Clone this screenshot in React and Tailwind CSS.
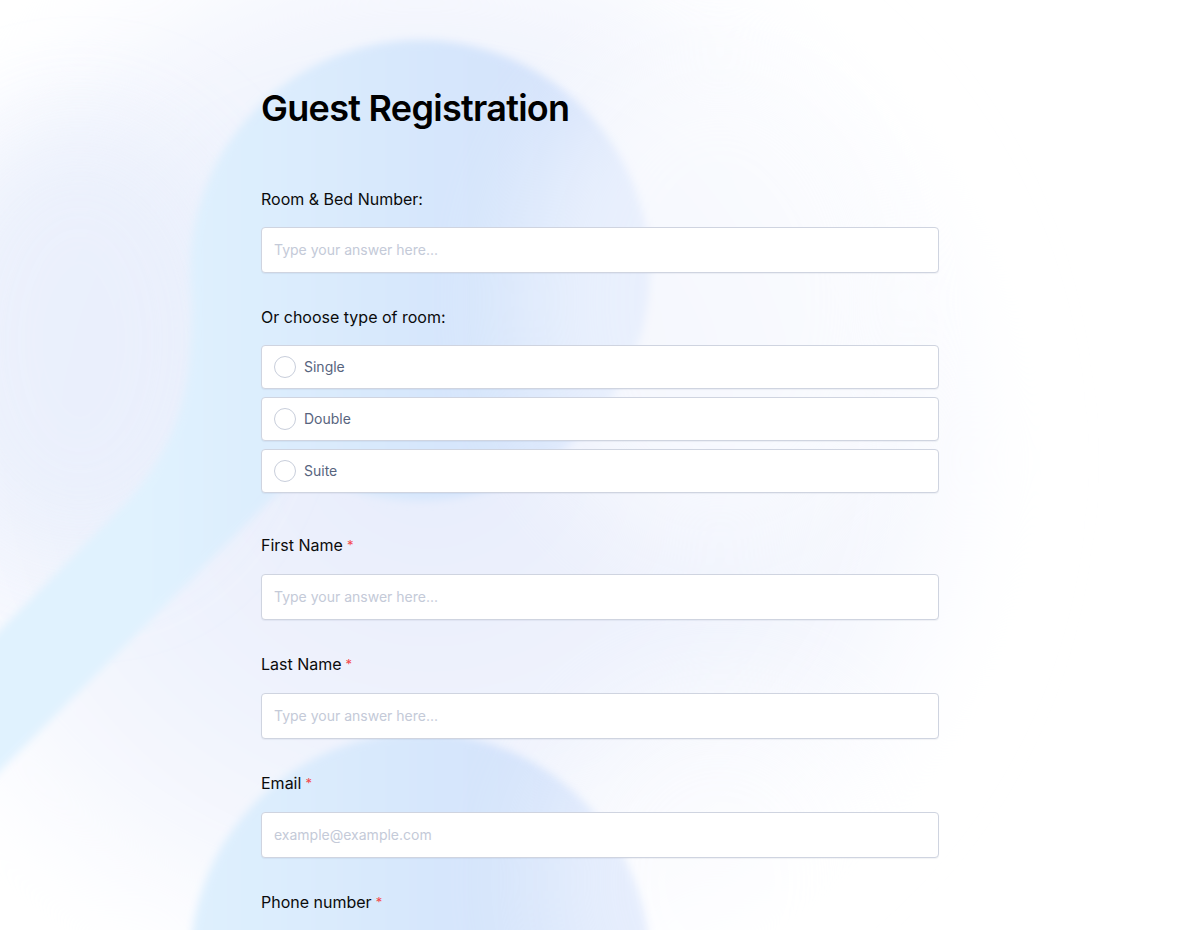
import React from "react";

function Backdrop() {
  return (
    <svg className="absolute inset-0 w-full h-full pointer-events-none" viewBox="0 0 1200 930" preserveAspectRatio="none">
      <defs>
        <linearGradient id="blob" x1="150" y1="0" x2="680" y2="0" gradientUnits="userSpaceOnUse">
          <stop offset="0" stopColor="#e0f2fe" />
          <stop offset="0.55" stopColor="#d6e6fc" />
          <stop offset="1" stopColor="#d2dffb" />
        </linearGradient>
        <radialGradient id="haze" cx="430" cy="430" r="620" gradientUnits="userSpaceOnUse">
          <stop offset="0" stopColor="#e6ecfc" />
          <stop offset="0.6" stopColor="#f1f4fd" />
          <stop offset="1" stopColor="#ffffff" />
        </radialGradient>
        <filter id="soft" x="-20%" y="-20%" width="140%" height="140%">
          <feGaussianBlur stdDeviation="4" />
        </filter>
        <filter id="wide" x="-50%" y="-50%" width="200%" height="200%">
          <feGaussianBlur stdDeviation="50" />
        </filter>
      </defs>
      <rect x="0" y="0" width="1200" height="930" fill="#ffffff" />
      <ellipse cx="420" cy="460" rx="560" ry="520" fill="url(#haze)" filter="url(#wide)" />
      <ellipse cx="80" cy="340" rx="160" ry="220" fill="#e9effc" opacity="0.8" filter="url(#wide)" />
      <g filter="url(#soft)" fill="url(#blob)">
        <circle cx="420" cy="270" r="230" />
        <path d="M192 270 C190 340 200 420 128 500 L-60 690 L-60 830 L0 770 L320 450 L420 270 Z" />
        <circle cx="420" cy="962" r="230" />
      </g>
      <ellipse cx="720" cy="300" rx="200" ry="260" fill="#ffffff" opacity="0.5" filter="url(#wide)" />
      <ellipse cx="720" cy="880" rx="180" ry="200" fill="#ffffff" opacity="0.45" filter="url(#wide)" />
    </svg>
  );
}

function Label({ children, required }) {
  return (
    <div className={"text-[16px] leading-6 text-[#0b0b0b] " + (required ? "mb-[17px]" : "mb-4")}>
      {children}
      {required && <span className="text-[#f4474a] text-[13px] align-top ml-1">*</span>}
    </div>
  );
}

function TextField({ label, required, placeholder }) {
  return (
    <div className="mb-8">
      <Label required={required}>{label}</Label>
      <input
        className="w-full h-[46px] bg-white border border-[#cfd4e0] rounded-[4px] px-3 pb-px text-[14px] text-[#2c3345] placeholder:text-[#c4cad8] outline-none shadow-[0_1px_1px_rgba(40,50,80,0.06)]"
        placeholder={placeholder}
      />
    </div>
  );
}

const rooms = ["Single", "Double", "Suite"];

export default function App() {
  return (
    <div className="relative min-h-[930px] overflow-hidden font-['Inter','Liberation_Sans',sans-serif]">
      <Backdrop />
      <div className="relative w-[678px] mx-auto pt-[84px]">
        <h1 className="text-[36px] leading-[48px] font-semibold tracking-[-0.02em] text-black mb-[55px]">
          Guest Registration
        </h1>

        <TextField label="Room & Bed Number:" placeholder="Type your answer here..." />

        <div className="mb-10">
          <Label>Or choose type of room:</Label>
          <div className="flex flex-col gap-2">
            {rooms.map((r) => (
              <label key={r} className="flex items-center h-[44px] bg-white border border-[#cfd4e0] rounded-[4px] pl-3 pb-px gap-2 shadow-[0_1px_1px_rgba(40,50,80,0.06)]">
                <span className="w-[22px] h-[22px] rounded-full border border-[#c8cedb] bg-white" />
                <span className="text-[14px] text-[#57647e]">{r}</span>
              </label>
            ))}
          </div>
        </div>

        <TextField label="First Name" required placeholder="Type your answer here..." />
        <TextField label="Last Name" required placeholder="Type your answer here..." />
        <TextField label="Email" required placeholder="example@example.com" />
        <Label required>Phone number</Label>
      </div>
    </div>
  );
}
